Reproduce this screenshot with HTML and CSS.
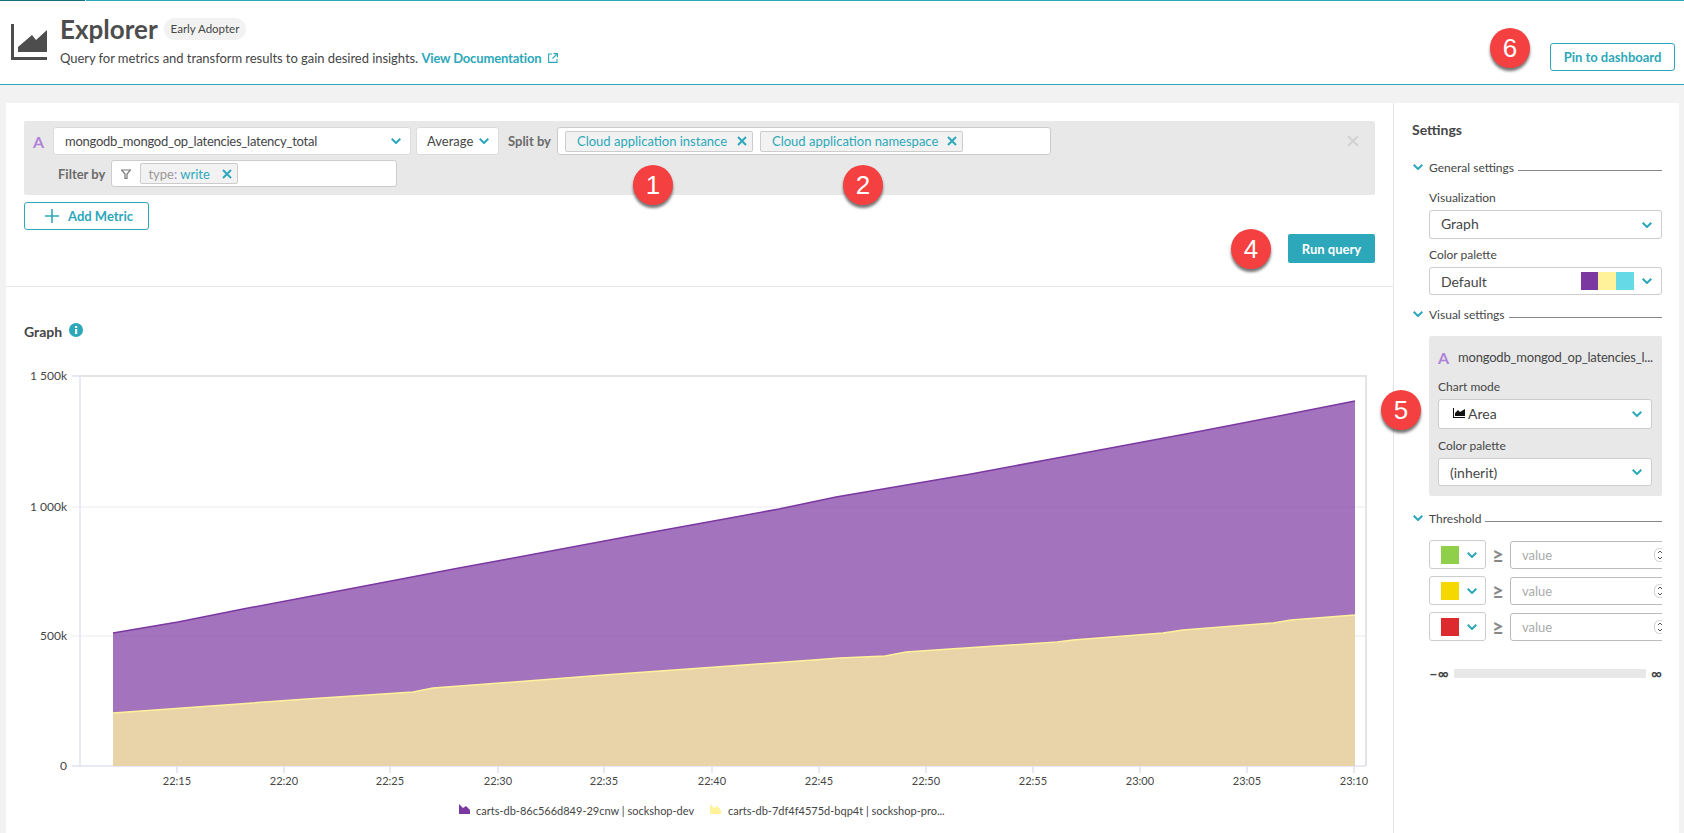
FILE: index.html
```html
<!DOCTYPE html>
<html>
<head>
    <meta charset="UTF-8">
    <title>Explorer</title>
    <link rel="stylesheet" href="styles.css">
</head>
<body>

<svg class="defs" width="0" height="0">
    <symbol id="chev" viewBox="0 0 10 6"><polyline points="0.7,0.7 5,5 9.3,0.7" fill="none" stroke="#2ca8ba" stroke-width="2"/></symbol>
    <symbol id="cross" viewBox="0 0 10 10"><path d="M1 1L9 9M9 1L1 9" fill="none" stroke="#2ca8ba" stroke-width="2"/></symbol>
    <symbol id="spin" viewBox="0 0 12 14"><rect x="0.5" y="0.5" width="11" height="13" rx="5" fill="#fff" stroke="#ccc"/><path d="M4 5L6 3L8 5M4 9L6 11L8 9" fill="none" stroke="#555" stroke-width="1"/></symbol>
</svg>

<div class="topline"><span class="topline-dark"></span><span class="topline-rest"></span></div>

<!-- Шапка -->
<div class="header">
    <svg class="header-icon" width="36" height="36" viewBox="0 0 36 36">
        <path d="M0 0H3V33H36V36H0Z" fill="#4d4d4d"/>
        <path d="M7 23L21 11L25 16L36 6V28H7Z" fill="#4d4d4d"/>
    </svg>
    <div class="header-text">
        <div class="title-row">
            <h1>Explorer</h1>
            <span class="pill">Early Adopter</span>
        </div>
        <p class="subtitle">Query for metrics and transform results to gain desired insights.
            <a class="doc-link">View Documentation</a>
            <svg class="ext-icon" width="10" height="10" viewBox="0 0 10 10"><path d="M4 1H0.6V9.4H9V6M5.5 0.6H9.4V4.5M9.2 0.8L4.5 5.5" fill="none" stroke="#2ca8ba" stroke-width="1.1"/></svg>
        </p>
    </div>
    <button class="btn-outline btn-pin">Pin to dashboard</button>
</div>

<div class="content">
    <div class="main">
        <div class="query-section">
            <div class="query-box">
                <div class="query-row">
                    <span class="letter">A</span>
                    <div class="select select-metric">mongodb_mongod_op_latencies_latency_total<svg class="chev"><use href="#chev"/></svg></div>
                    <div class="select select-agg">Average<svg class="chev"><use href="#chev"/></svg></div>
                    <span class="query-label label-split">Split by</span>
                    <div class="token-box token-split">
                        <span class="tag tag-instance">Cloud application instance<svg class="tag-x"><use href="#cross"/></svg></span>
                        <span class="tag tag-namespace">Cloud application namespace<svg class="tag-x"><use href="#cross"/></svg></span>
                    </div>
                    <svg class="remove-x" width="12" height="12" viewBox="0 0 12 12"><path d="M1 1L11 11M11 1L1 11" stroke="#d2d2d2" stroke-width="2"/></svg>
                </div>
                <div class="query-row filter-row">
                    <span class="query-label">Filter by</span>
                    <div class="token-box token-filter">
                        <svg class="filter-icon" width="10" height="10" viewBox="0 0 10 10"><path d="M0.5 1H9.5L6 5V9.5H4V5Z" fill="none" stroke="#777" stroke-width="1.2"/></svg>
                        <span class="tag tag-filter"><span class="tag-key">type<b>:</b></span> write<svg class="tag-x"><use href="#cross"/></svg></span>
                    </div>
                </div>
            </div>
            <button class="btn-outline btn-add"><svg width="14" height="14" viewBox="0 0 14 14"><path d="M7 0V14M0 7H14" stroke="#2ca8ba" stroke-width="1.6"/></svg>Add Metric</button>
            <div class="run-row"><button class="btn-run">Run query</button></div>
        </div>

        <div class="graph-section">
            <div class="graph-title">
                <span>Graph</span>
                <svg width="14" height="14" viewBox="0 0 14 14"><circle cx="7" cy="7" r="7" fill="#2ca8ba"/><rect x="6" y="6" width="2.2" height="5" fill="#fff"/><rect x="6" y="3" width="2.2" height="2" fill="#fff"/></svg>
            </div>
            <!-- координаты графика совпадают с координатами страницы -->
            <svg class="chart" width="1387" height="483" viewBox="6 350 1387 483">
                <path class="grid" d="M72 507H1366M72 636H1366"/>
                <path class="frame" d="M80 376H1366V766"/>
                <path class="axis" d="M72 376H80M72 766H1366M80 376V766M177 766V773M284 766V773M390 766V773M498 766V773M604 766V773M712 766V773M819 766V773M926 766V773M1033 766V773M1140 766V773M1247 766V773M1354 766V773"/>
                <path class="area-purple" d="M113 766V633L178 622L243 609L349 589L459 568L508 559L631 536L730 518L779 509L836 497L971 474L1057 458L1191 433L1248 422L1355 401V766Z"/>
                <path class="line-purple" d="M113 633L178 622L243 609L349 589L459 568L508 559L631 536L730 518L779 509L836 497L971 474L1057 458L1191 433L1248 422L1355 401"/>
                <path class="area-yellow" d="M113 766V713L197 707L307 699L413 692L433 688L500 683L604 675L730 666L840 658L885 656L906 652L950 649L1057 642L1073 640L1163 633L1183 630L1273 623L1291 620L1355 615V766Z"/>
                <path class="line-yellow" d="M113 713L197 707L307 699L413 692L433 688L500 683L604 675L730 666L840 658L885 656L906 652L950 649L1057 642L1073 640L1163 633L1183 630L1273 623L1291 620L1355 615"/>
                <g class="y-labels">
                    <text x="67" y="380">1 500k</text>
                    <text x="67" y="511">1 000k</text>
                    <text x="67" y="640">500k</text>
                    <text x="67" y="770">0</text>
                </g>
                <g class="x-labels">
                    <text x="177" y="785">22:15</text>
                    <text x="284" y="785">22:20</text>
                    <text x="390" y="785">22:25</text>
                    <text x="498" y="785">22:30</text>
                    <text x="604" y="785">22:35</text>
                    <text x="712" y="785">22:40</text>
                    <text x="819" y="785">22:45</text>
                    <text x="926" y="785">22:50</text>
                    <text x="1033" y="785">22:55</text>
                    <text x="1140" y="785">23:00</text>
                    <text x="1247" y="785">23:05</text>
                    <text x="1354" y="785">23:10</text>
                </g>
                <path d="M459 804L463 808L466 806L470 810V814H459Z" fill="#7c38a1"/>
                <text class="legend" x="476" y="815">carts-db-86c566d849-29cnw | sockshop-dev</text>
                <path d="M710 804L714 808L717 806L721 810V814H710Z" fill="#fff29a"/>
                <text class="legend" x="728" y="815">carts-db-7df4f4575d-bqp4t | sockshop-pro...</text>
            </svg>
        </div>
    </div>

    <div class="settings">
        <div class="settings-title">Settings</div>

        <div class="section-head"><svg class="chev"><use href="#chev"/></svg><span>General settings</span><i></i></div>
        <div class="section-body">
            <div class="field-label first">Visualization</div>
            <div class="select select-wide h29">Graph<svg class="chev"><use href="#chev"/></svg></div>
            <div class="field-label">Color palette</div>
            <div class="select select-wide">Default
                <span class="palette"><b class="c1"></b><b class="c2"></b><b class="c3"></b></span>
                <svg class="chev"><use href="#chev"/></svg>
            </div>
        </div>

        <div class="section-head mt11"><svg class="chev"><use href="#chev"/></svg><span>Visual settings</span><i></i></div>
        <div class="section-body">
            <div class="visual-box">
                <div class="visual-title"><span class="letter">A</span><span class="visual-name">mongodb_mongod_op_latencies_l...</span></div>
                <div class="field-label">Chart mode</div>
                <div class="select select-wide h30">
                    <span class="mode"><svg width="12" height="10" viewBox="0 0 12 10"><path d="M0 0H1V9H12V10H0Z" fill="#111"/><path d="M2 5L5 2L7 4L12 1V8H2Z" fill="#111"/></svg>Area</span>
                    <svg class="chev"><use href="#chev"/></svg>
                </div>
                <div class="field-label">Color palette</div>
                <div class="select select-wide">(inherit)<svg class="chev"><use href="#chev"/></svg></div>
            </div>
        </div>

        <div class="section-head mt14"><svg class="chev"><use href="#chev"/></svg><span>Threshold</span><i></i></div>
        <div class="section-body">
            <div class="threshold-row first">
                <div class="color-pick"><b class="t-green"></b><svg class="chev"><use href="#chev"/></svg></div>
                <span class="gte">≥</span>
                <div class="value-box"><span>value</span><svg class="spin"><use href="#spin"/></svg></div>
            </div>
            <div class="threshold-row">
                <div class="color-pick"><b class="t-yellow"></b><svg class="chev"><use href="#chev"/></svg></div>
                <span class="gte">≥</span>
                <div class="value-box"><span>value</span><svg class="spin"><use href="#spin"/></svg></div>
            </div>
            <div class="threshold-row">
                <div class="color-pick"><b class="t-red"></b><svg class="chev"><use href="#chev"/></svg></div>
                <span class="gte">≥</span>
                <div class="value-box"><span>value</span><svg class="spin"><use href="#spin"/></svg></div>
            </div>
            <div class="range-row"><span>–∞</span><i></i><span>∞</span></div>
        </div>
    </div>
</div>

<!-- Красные метки поверх скриншота -->
<span class="badge b1">1</span>
<span class="badge b2">2</span>
<span class="badge b4">4</span>
<span class="badge b5">5</span>
<span class="badge b6">6</span>

</body>
</html>
```

FILE: styles.css
```css
* {
    box-sizing: border-box;
}
html, body {
    margin: 0;
    height: 833px;
    overflow: hidden;
}
body {
    position: relative;
    font-family: Lato, "Noto Sans", sans-serif;
    font-size: 13px;
    color: #454646;
    background-color: #f2f2f2;
}
.defs {
    position: absolute;
}
.topline {
    display: flex;
    height: 1px;
    background-color: #fff;
}
.topline-dark {
    width: 85px;
    background-color: #14727f;
}
.topline-rest {
    flex: 1;
    margin-left: 1px;
    background-color: #2ca8ba;
}

/* header */
.header {
    position: relative;
    display: flex;
    height: 84px;
    padding: 23px 9px 0 11px;
    background-color: #fff;
    border-bottom: 1px solid #2ca8ba;
}
.header-icon {
    flex: none;
}
.header-text {
    margin-left: 13px;
    margin-top: -8px;
}
.title-row {
    display: flex;
    align-items: center;
    height: 26px;
}
h1 {
    margin: 0;
    font-size: 26px;
    font-weight: 700;
    color: #4d4d4d;
}
.pill {
    margin-left: 6px;
    padding: 0 7px;
    height: 22px;
    line-height: 22px;
    border-radius: 11px;
    background-color: #f2f2f2;
    font-size: 11.5px;
}
.subtitle {
    margin: 7px 0 0;
    font-size: 13px;
    line-height: 18px;
    letter-spacing: -0.05px;
    white-space: nowrap;
}
.doc-link {
    color: #2ca8ba;
    font-weight: 700;
    letter-spacing: -0.15px;
}
.ext-icon {
    margin-left: 3px;
}
.btn-outline {
    font-family: inherit;
    font-size: 13px;
    color: #2ca8ba;
    background-color: #fff;
    border: 1px solid #2ca8ba;
    border-radius: 3px;
    height: 28px;
}
.btn-pin {
    margin-left: auto;
    margin-top: 19px;
    width: 125px;
    padding: 0;
    font-weight: 700;
    font-size: 13px;
}

/* main layout */
.content {
    display: flex;
    padding: 18px 5px 0 6px;
    height: 748px;
}
.main {
    width: 1387px;
    background-color: #fff;
}
.query-section {
    height: 184px;
    padding: 18px 18px 0;
    border-bottom: 1px solid #e6e6e6;
}
.query-box {
    height: 74px;
    padding-top: 6px;
    background-color: #e8e8e8;
    border-radius: 2px;
}
.query-row {
    display: flex;
    align-items: center;
    height: 28px;
    padding-left: 9px;
}
.filter-row {
    height: 27px;
    margin-top: 5px;
    padding-left: 34px;
}
.letter {
    width: 20px;
    flex: none;
    font-size: 16px;
    font-weight: 700;
    color: #b083d8;
}
.select {
    position: relative;
    display: flex;
    align-items: center;
    height: 28px;
    padding-left: 11px;
    font-size: 13px;
    background-color: #fff;
    border: 1px solid #ccc;
    border-radius: 3px;
}
.chev {
    flex: none;
    width: 10px;
    height: 6px;
}
.select > .chev {
    position: absolute;
    right: 9px;
    top: 50%;
    margin-top: -3px;
}
.select-metric {
    width: 358px;
    letter-spacing: -0.25px;
    border-color: #dcdcdc;
}
.select-agg {
    width: 83px;
    margin-left: 5px;
    padding-left: 10px;
    border-color: #dcdcdc;
}
.query-label {
    font-weight: 700;
    color: #6b6b6b;
    margin-right: 6px;
}
.label-split {
    margin-left: 9px;
}
.token-box {
    display: flex;
    align-items: center;
    background-color: #fff;
    border: 1px solid #ccc;
    border-radius: 3px;
    height: 28px;
    padding-left: 7px;
}
.token-split {
    width: 494px;
}
.token-filter {
    width: 286px;
    height: 27px;
    padding-left: 9px;
}
.filter-icon {
    margin-right: 9px;
}
.tag {
    display: inline-flex;
    align-items: center;
    height: 21px;
    margin-right: 7px;
    padding: 0 5px 0 11px;
    color: #2ca8ba;
    background-color: #f2f2f2;
    border: 1px solid #ccc;
    border-radius: 2px;
    white-space: nowrap;
}
.tag-instance {
    width: 188px;
}
.tag-namespace {
    width: 203px;
}
.tag-filter {
    width: 98px;
    padding-left: 7px;
    margin-right: 0;
    white-space: pre;
}
.tag-key {
    color: #999;
}
.tag-key b {
    color: #b083d8;
    font-weight: 400;
}
.tag-x {
    width: 10px;
    height: 10px;
    margin-left: auto;
    flex: none;
}
.remove-x {
    margin-left: auto;
    margin-right: 16px;
}
.btn-add {
    display: flex;
    align-items: center;
    width: 125px;
    margin-top: 7px;
    padding: 0 0 0 20px;
    font-weight: 700;
}
.btn-add svg {
    margin-right: 9px;
}
.run-row {
    display: flex;
    justify-content: flex-end;
    margin-top: 4px;
}
.btn-run {
    width: 87px;
    height: 29px;
    padding: 0;
    font-family: inherit;
    font-size: 13px;
    font-weight: 700;
    color: #fff;
    background-color: #2ca8ba;
    border: none;
    border-radius: 2px;
}

/* graph */
.graph-section {
    padding-top: 35px;
}
.graph-title {
    display: flex;
    align-items: center;
    height: 18px;
    padding-left: 18px;
    font-weight: 700;
    font-size: 14px;
    color: #454646;
}
.graph-title svg {
    margin-left: 7px;
    margin-top: -3px;
}
.chart {
    display: block;
    margin-top: 10px;
}
.grid {
    fill: none;
    stroke: #ebebef;
    stroke-width: 1;
}
.frame {
    fill: none;
    stroke: #e4e4e4;
    stroke-width: 2;
}
.axis {
    fill: none;
    stroke: #dfe3f1;
    stroke-width: 1.5;
}
.area-purple {
    fill: #7c38a1;
    fill-opacity: 0.7;
}
.line-purple {
    fill: none;
    stroke: #7c38a1;
    stroke-width: 1.5;
}
.area-yellow {
    fill: #e8d4a8;
}
.line-yellow {
    fill: none;
    stroke: #fff29a;
    stroke-width: 1.5;
}
.y-labels text {
    font-size: 12px;
    text-anchor: end;
    fill: #454646;
}
.x-labels text {
    font-size: 11px;
    text-anchor: middle;
    fill: #454646;
}
.legend {
    font-size: 11px;
    fill: #454646;
}

/* settings */
.settings {
    width: 286px;
    padding: 18px 17px 0 18px;
    background-color: #fff;
    border-left: 1px solid #e6e6e6;
    overflow: hidden;
}
.settings-title {
    height: 18px;
    line-height: 18px;
    font-size: 14px;
    font-weight: 700;
}
.section-head {
    display: flex;
    align-items: center;
    height: 16px;
    margin-top: 20px;
    font-size: 12px;
    white-space: nowrap;
}
.section-head.mt11 {
    margin-top: 11px;
}
.section-head.mt14 {
    margin-top: 14px;
}
.section-head .chev {
    margin: 0 6px 0 1px;
}
.section-head i {
    flex: 1;
    height: 1px;
    margin: 6px 0 0 4px;
    background-color: #888;
}
.section-body {
    padding-left: 17px;
}
.field-label {
    height: 16px;
    line-height: 17px;
    margin-top: 7px;
    font-size: 12px;
}
.field-label.first {
    margin-top: 14px;
}
.field-label + .select {
    margin-top: 5px;
}
.select-wide {
    width: 100%;
    font-size: 14px;
}
.h29 {
    height: 29px;
    padding-bottom: 2px;
}
.h30 {
    height: 30px;
    padding-bottom: 2px;
}
.palette {
    position: absolute;
    right: 27px;
    top: 4px;
    display: flex;
}
.palette b {
    width: 18px;
    height: 18px;
}
.palette .c1 {
    background-color: #7c38a1;
    width: 17px;
}
.palette .c2 {
    background-color: #fff29a;
}
.palette .c3 {
    background-color: #66d9e6;
}
.visual-box {
    height: 160px;
    margin-top: 14px;
    padding: 13px 10px 0 9px;
    background-color: #e8e8e8;
    border-radius: 2px;
}
.visual-title {
    display: flex;
    align-items: center;
    height: 16px;
    margin-bottom: 13px;
    white-space: nowrap;
}
.visual-name {
    font-size: 13px;
    letter-spacing: -0.2px;
}
.visual-box .field-label {
    margin-top: 8px;
}
.visual-title + .field-label {
    margin-top: 0;
}
.mode {
    display: flex;
    align-items: center;
    padding-left: 3px;
}
.mode svg {
    margin-right: 3px;
}
.threshold-row {
    display: flex;
    align-items: center;
    height: 29px;
    margin-top: 7px;
    overflow: hidden;
}
.threshold-row.first {
    margin-top: 14px;
}
.color-pick {
    display: flex;
    align-items: center;
    flex: none;
    width: 57px;
    height: 29px;
    padding-left: 11px;
    border: 1px solid #ccc;
    border-radius: 3px;
}
.color-pick b {
    width: 18px;
    height: 18px;
    margin-right: 8px;
}
.t-green {
    background-color: #8fcf4a;
}
.t-yellow {
    background-color: #f5d800;
}
.t-red {
    background-color: #dc2a2e;
}
.gte {
    width: 24px;
    flex: none;
    text-align: center;
    font-size: 20px;
    font-weight: 700;
    color: #888;
}
.value-box {
    display: flex;
    align-items: center;
    flex: none;
    width: 160px;
    height: 28px;
    padding-left: 11px;
    color: #aaa;
    border: 1px solid #bbb;
    border-radius: 3px;
}
.spin {
    width: 12px;
    height: 14px;
    margin-left: auto;
    margin-right: 3px;
}
.range-row {
    display: flex;
    align-items: center;
    height: 16px;
    margin-top: 24px;
    font-size: 15px;
    font-weight: 700;
    white-space: nowrap;
}
.range-row i {
    flex: 1;
    height: 9px;
    margin: 0 5px;
    background-color: #e8e8e8;
}

/* annotations */
.badge {
    position: absolute;
    width: 40px;
    height: 40px;
    border-radius: 50%;
    background-color: #f44040;
    box-shadow: 0 3px 3px rgba(0, 0, 0, 0.55);
    color: #fff;
    font-family: "Liberation Sans", sans-serif;
    font-size: 26px;
    line-height: 40px;
    text-align: center;
}
.b1 { left: 633px; top: 165px; }
.b2 { left: 843px; top: 165px; }
.b4 { left: 1231px; top: 229px; }
.b5 { left: 1381px; top: 390px; }
.b6 { left: 1490px; top: 28px; }
```
